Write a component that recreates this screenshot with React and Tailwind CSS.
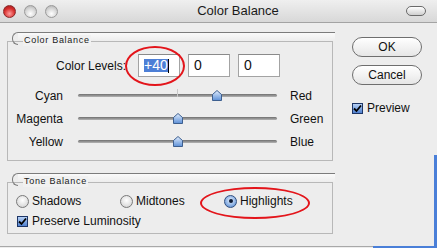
import React from "react";

const font = { fontFamily: '"Liberation Sans", Arial, sans-serif' };

function Light({ red }) {
  return (
    <div
      className={
        red
          ? "w-[13px] h-[13px] rounded-full border border-[#8a2a2a] bg-[radial-gradient(circle_at_50%_70%,#ff9d9d,#d8302f_55%,#9b1515)]"
          : "w-[13px] h-[13px] rounded-full border border-[#9a9a9a] bg-[radial-gradient(circle_at_50%_70%,#ffffff,#d6d6d6_55%,#a9a9a9)]"
      }
    />
  );
}

function GroupHeader({ label }) {
  return (
    <div className="relative z-10 ml-[5px] w-[323px] h-[13px] -mb-[4px] flex">
      <div className="w-[6px] h-[13px] border-l border-t border-b border-[#7c7c7c] rounded-l-[6px]" />
      <div className="flex-1 h-[9px] flex items-start border-t border-[#7c7c7c] bg-gradient-to-b from-[#fafafa] to-[#ededed]">
        <span className="block mt-[2px] ml-[5px] px-[1px] text-[9px] leading-[11px] tracking-[0.7px] text-[#1a1a1a] bg-[#f1f1f1]">
          {label}
        </span>
      </div>
    </div>
  );
}

function Thumb({ left }) {
  return (
    <svg
      className="absolute top-[-4px]"
      style={{ left: left - 4.5 }}
      width="10"
      height="11"
      viewBox="0 0 10 11"
    >
      <defs>
        <linearGradient id="tg" x1="0" y1="0" x2="0" y2="1">
          <stop offset="0" stopColor="#e3efff" />
          <stop offset="1" stopColor="#5c8fd6" />
        </linearGradient>
      </defs>
      <path d="M5 0.5 L9.5 4.5 L9.5 10.5 L0.5 10.5 L0.5 4.5 Z" fill="url(#tg)" stroke="#3d5f8f" strokeWidth="1" />
    </svg>
  );
}

function Slider({ left, right, value, tick }) {
  return (
    <div className="flex items-center h-[23px]">
      <span className="w-[55px] text-right text-[12px] text-[#111]">{left}</span>
      <div className="relative ml-[15px] w-[199px] h-[3px] rounded-full bg-gradient-to-b from-[#6f6f6f] to-[#b5b5b5]">
        {tick && <div className="absolute left-[99px] top-[-5px] w-[1px] h-[8px] bg-[#c8c8c8]" />}
        <Thumb left={value} />
      </div>
      <span className="ml-[13px] text-[12px] text-[#111]">{right}</span>
    </div>
  );
}

function Radio({ label, checked }) {
  return (
    <div className="flex items-center gap-[3px] w-[104px]">
      <div
        className={
          checked
            ? "w-[13px] h-[13px] rounded-full border border-[#2f4f80] bg-[radial-gradient(circle_at_50%_40%,#e6f1ff,#78a3dd_70%,#4a72b0)] flex items-center justify-center"
            : "w-[13px] h-[13px] rounded-full border border-[#7a7a7a] bg-[radial-gradient(circle_at_50%_40%,#ffffff,#dcdcdc_70%,#b3b3b3)]"
        }
      >
        {checked && <div className="w-[4px] h-[4px] rounded-full bg-[#0d1a33]" />}
      </div>
      <span className="text-[12px] text-[#111]">{label}</span>
    </div>
  );
}

function Check({ label }) {
  return (
    <div className="flex items-center gap-[4px]">
      <div className="w-[11px] h-[11px] border border-[#1d3566] bg-gradient-to-b from-[#b7d1f5] to-[#4f80cf] flex items-center justify-center">
        <svg width="9" height="9" viewBox="0 0 9 9">
          <path d="M1 4.5 L3.5 7 L8 1.5" fill="none" stroke="#000" strokeWidth="1.8" />
        </svg>
      </div>
      <span className="text-[12px] text-[#111]">{label}</span>
    </div>
  );
}

function Field({ children }) {
  return (
    <div className="w-[42px] h-[23px] bg-white border border-[#a3a3a3] border-t-[#8a8a8a] flex items-center pl-[5px] text-[14px] text-[#111]">
      {children}
    </div>
  );
}

function PillButton({ label }) {
  return (
    <div className="w-[70px] h-[20px] rounded-full border border-[#6e6e6e] bg-gradient-to-b from-[#ffffff] to-[#e6e6e6] flex items-center justify-center text-[12px] text-[#111]">
      {label}
    </div>
  );
}

export default function App() {
  return (
    <div className="relative w-[437px] h-[248px] overflow-hidden bg-[#ededed]" style={font}>
      {/* title bar */}
      <div className="h-[23px] flex items-center px-[3px] border-b border-[#a3a3a3] bg-gradient-to-b from-[#efefef] to-[#d8d8d8]">
        <div className="flex gap-[8px]">
          <Light red />
          <Light />
          <Light />
        </div>
        <div className="flex-1 text-center text-[13px] text-[#1a1a1a] pl-[12px]">Color Balance</div>
        <div className="w-[20px] h-[10px] mr-[8px] rounded-full border border-[#6a6a6a] bg-gradient-to-b from-[#ffffff] to-[#cfcfcf]" />
      </div>

      <div className="flex">
        {/* left column */}
        <div className="w-[336px] pl-[7px]">
          <div className="pt-[9px]">
            <GroupHeader label="Color Balance" />
            <div className="w-[326px] h-[120px] border border-[#b8b8b8]">
              <div className="flex items-center pt-[12px]">
                <span className="w-[118px] text-right text-[12px] text-[#111]">Color Levels:</span>
                <div className="flex gap-[8px] ml-[12px]">
                  <Field>
                    <span className="bg-[#4d7fd6] text-white leading-[13px]">+40</span>
                    <span className="w-[1px] h-[14px] bg-black" />
                  </Field>
                  <Field>0</Field>
                  <Field>0</Field>
                </div>
              </div>
              <div className="mt-[7px]">
                <Slider left="Cyan" right="Red" value={138} tick />
                <Slider left="Magenta" right="Green" value={99} />
                <Slider left="Yellow" right="Blue" value={99} />
              </div>
            </div>
          </div>

          <div className="mt-[12px]">
            <GroupHeader label="Tone Balance" />
            <div className="w-[326px] h-[52px] border border-[#b8b8b8]">
              <div className="flex h-[16px] mt-[10px] pl-[8px]">
                <Radio label="Shadows" />
                <Radio label="Midtones" />
                <Radio label="Highlights" checked />
              </div>
              <div className="h-[16px] mt-[4px] pl-[9px] flex items-center">
                <Check label="Preserve Luminosity" />
              </div>
            </div>
          </div>
        </div>

        {/* right column */}
        <div className="pl-[16px] pt-[14px]">
          <PillButton label="OK" />
          <div className="mt-[8px]">
            <PillButton label="Cancel" />
          </div>
          <div className="mt-[16px] flex items-center h-[14px]">
            <Check label="Preview" />
          </div>
        </div>
      </div>

      {/* red annotation ellipses */}
      <div className="absolute left-[125px] top-[46px] w-[60px] h-[40px] rounded-[50%] border-2 border-[#e3151b]" />
      <div className="absolute left-[200px] top-[187px] w-[110px] h-[32px] rounded-[50%] border-2 border-[#e3151b]" />

      {/* window edges */}
      <div className="absolute left-0 bottom-[1px] w-[437px] h-[1px] bg-[#a8a8a8]" />
      <div className="absolute left-[373px] bottom-0 w-[64px] h-[2px] bg-[#4a7fd8]" />
      <div className="absolute right-0 top-[155px] w-[3px] h-[93px] bg-[#4a7fd8]" />
    </div>
  );
}
